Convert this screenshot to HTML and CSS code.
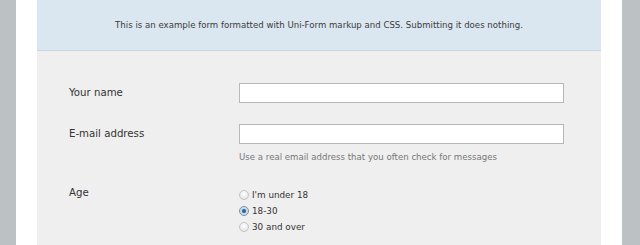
FILE: index.html
```html
<!DOCTYPE html>
<html lang="en">
<head>
  <meta charset="UTF-8">
  <title>Uni-Form example</title>
  <link rel="stylesheet" href="styles.css">
</head>
<body>

  <div id="page">
    <div id="panel">
      <p class="intro">This is an example form formatted with Uni-Form markup and CSS. Submitting it does nothing.</p>

      <form class="uni-form">
        <div class="ctrl-holder">
          <label for="name">Your name</label>
          <div class="field">
            <input type="text" id="name" class="text-input">
          </div>
        </div>

        <div class="ctrl-holder">
          <label for="email">E-mail address</label>
          <div class="field">
            <input type="text" id="email" class="text-input">
            <p class="form-hint">Use a real email address that you often check for messages</p>
          </div>
        </div>

        <div class="ctrl-holder age">
          <label>Age</label>
          <div class="field radios">
            <label class="choice"><input type="radio" name="age"> I'm under 18</label>
            <label class="choice"><input type="radio" name="age" checked> 18-30</label>
            <label class="choice"><input type="radio" name="age"> 30 and over</label>
          </div>
        </div>
      </form>
    </div>
  </div>

</body>
</html>
```

FILE: styles.css
```css
body {
  margin: 0;
  background-color: #bcc1c4;
  font-family: "DejaVu Sans", Verdana, sans-serif;
  color: #333;
}

#page {
  width: 564px;
  margin-left: 16px;
  padding: 0 21px;
  background-color: #fff;
  height: 245px;
}

#panel {
  background-color: #efefef;
  height: 100%;
}

.intro {
  margin: 0;
  height: 51px;
  line-height: 48px;
  text-align: center;
  font-size: 8.6px;
  color: #3c3c3c;
  background-color: #dae6f0;
  border-bottom: 1px solid #cad7e3;
  box-sizing: border-box;
  padding-top: 1px;
}

.uni-form {
  padding: 32px 0 0 32px;
}

.ctrl-holder {
  display: grid;
  grid-template-columns: 170px 325px;
  margin-bottom: 21px;
}

.ctrl-holder > label {
  font-size: 10.2px;
  padding-top: 4px;
  color: #333;
}

.age {
  margin-top: 4px;
}

.text-input {
  display: block;
  width: 325px;
  height: 20px;
  margin: 0;
  box-sizing: border-box;
  border: 1px solid #b8b8b8;
  background: #fff;
  font-size: 11px;
}

.form-hint {
  margin: 8px 0 0;
  font-size: 8.6px;
  color: #777;
}

.radios {
  display: flex;
  flex-direction: column;
  gap: 3px;
  padding-top: 5px;
}

.choice {
  display: flex;
  align-items: center;
  gap: 3px;
  font-size: 8.8px;
  color: #333;
  height: 13px;
}

.choice input {
  appearance: none;
  width: 10px;
  height: 10px;
  margin: 0;
  border-radius: 50%;
  border: 1px solid #c4c4c4;
  background: radial-gradient(circle at 50% 35%, #fff, #ddd);
  box-sizing: border-box;
}

.choice input:checked {
  border-color: #7a8fa3;
  background: radial-gradient(circle, #1d5e9c 0, #2f7cc0 30%, #c9d6e2 45%, #eaeaea 100%);
}
```
